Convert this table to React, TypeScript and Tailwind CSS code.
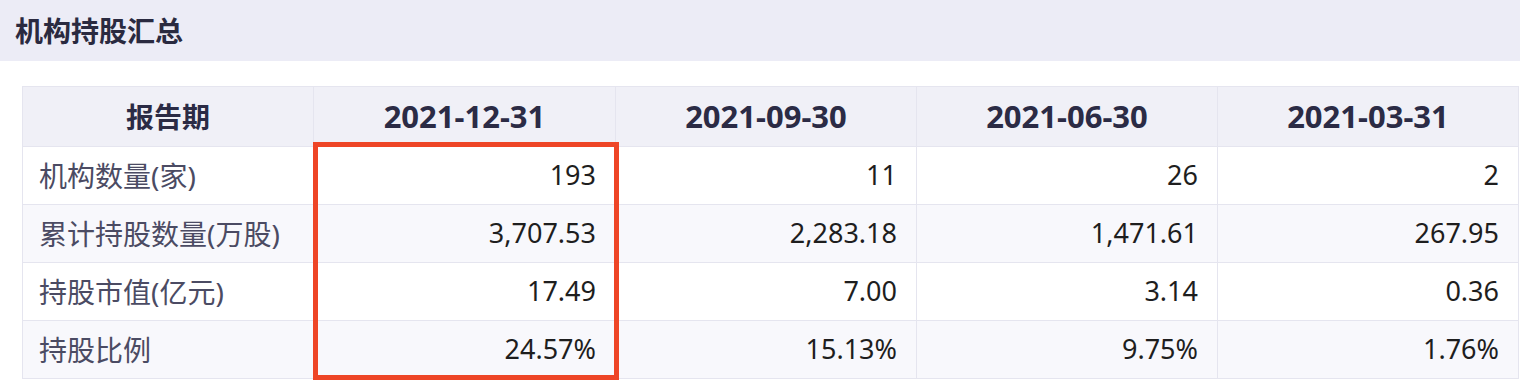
const periods = ["2021-12-31", "2021-09-30", "2021-06-30", "2021-03-31"];

const rows = [
  { label: "机构数量(家)", values: ["193", "11", "26", "2"] },
  { label: "累计持股数量(万股)", values: ["3,707.53", "2,283.18", "1,471.61", "267.95"] },
  { label: "持股市值(亿元)", values: ["17.49", "7.00", "3.14", "0.36"] },
  { label: "持股比例", values: ["24.57%", "15.13%", "9.75%", "1.76%"] },
];

export default function App() {
  return (
    <div
      className="w-[1520px] h-[380px] overflow-hidden bg-white"
      style={{ fontFamily: '"Noto Sans", "Noto Sans CJK SC", sans-serif' }}
    >
      <div className="h-[61px] flex items-center px-[15px] bg-[#ececf6]">
        <h1 className="text-[28px] font-bold text-[#2a2a40] leading-none">机构持股汇总</h1>
      </div>

      <div className="relative mt-[25px] ml-[22px] w-[1496px]">
        <table className="w-full table-fixed border-collapse border border-[#e5e5ef]">
          <colgroup>
            <col className="w-[291px]" />
            <col className="w-[302px]" />
            <col className="w-[301px]" />
            <col className="w-[301px]" />
            <col className="w-[301px]" />
          </colgroup>
          <thead>
            <tr className="h-[60px] bg-[#f0f0f7]">
              <th className="border border-[#e5e5ef] text-[28px] font-bold text-[#2b2b45] text-center">
                报告期
              </th>
              {periods.map((p) => (
                <th
                  key={p}
                  className="border border-[#e5e5ef] text-[31px] font-bold text-[#2b2b45] text-center"
                >
                  {p}
                </th>
              ))}
            </tr>
          </thead>
          <tbody>
            {rows.map((r, i) => (
              <tr key={r.label} className={"h-[58px] " + (i % 2 === 1 ? "bg-[#f8f8fc]" : "bg-white")}>
                <td className="border border-[#e5e5ef] pl-[16px] text-[28px] text-[#4b4b63] text-left whitespace-nowrap">
                  {r.label}
                </td>
                {r.values.map((v, j) => (
                  <td
                    key={j}
                    className="border border-[#e5e5ef] pr-[19px] text-[27px] text-[#1e1e1e] text-right"
                  >
                    {v}
                  </td>
                ))}
              </tr>
            ))}
          </tbody>
        </table>

        {/* highlight box over the latest period */}
        <div className="absolute left-[291px] top-[56px] w-[306px] h-[238px] border-[5px] border-[#ee4526] pointer-events-none" />
      </div>
    </div>
  );
}
